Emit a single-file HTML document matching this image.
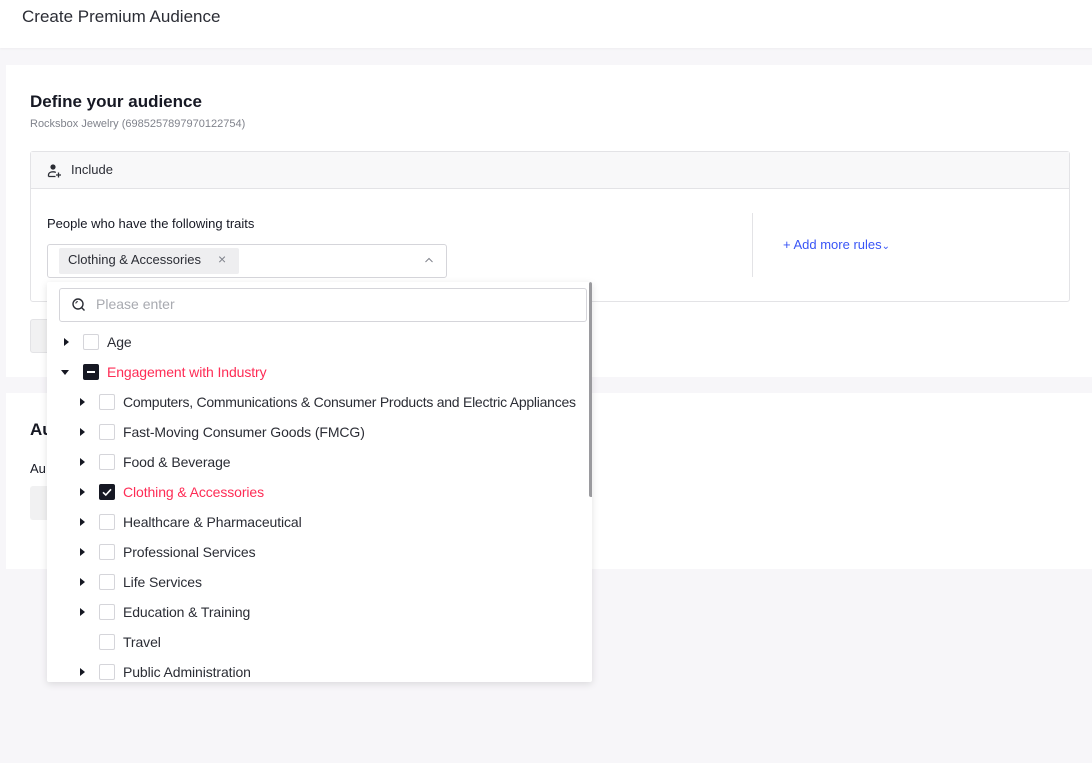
<!DOCTYPE html>
<html><head><style>
*{box-sizing:border-box;margin:0;padding:0}
body{width:1092px;height:763px;background:#f7f6f9;font-family:"Liberation Sans",sans-serif;position:relative;overflow:hidden;color:#161823}
.a{position:absolute}
.cb{position:absolute;width:16px;height:16px;border:1px solid #d5d5da;border-radius:2px;background:#fff}
.tri{position:absolute;width:0;height:0;border-top:4px solid transparent;border-bottom:4px solid transparent;border-left:5px solid #161823}
.it{position:absolute;font-size:14px;color:#2b2d35;white-space:nowrap;letter-spacing:-0.1px}
</style></head><body>
<div class="a" style="left:0;top:0;width:1092px;height:48px;background:#fff;box-shadow:0 1px 2px rgba(0,0,0,.04)"></div>
<div class="a" style="left:22px;top:7px;font-size:17px;color:#2b2d35">Create Premium Audience</div>

<div class="a" style="left:6px;top:65px;width:1086px;height:312px;background:#fff"></div>
<div class="a" style="left:30px;top:92px;font-size:17px;font-weight:bold;color:#161823">Define your audience</div>
<div class="a" style="left:30px;top:118px;font-size:11px;color:#80838c">Rocksbox Jewelry (6985257897970122754)</div>
<div class="a" style="left:30px;top:151px;width:1040px;height:151px;border:1px solid #e3e3e6;border-radius:3px"></div>
<div class="a" style="left:31px;top:152px;width:1038px;height:37px;background:#f8f8f9;border-bottom:1px solid #e3e3e6"></div>
<svg class="a" style="left:47px;top:163px" width="16" height="16" viewBox="0 0 16 16"><circle cx="6" cy="4" r="2.6" fill="#2b2d35"/><path d="M1.5 13.5v-1.5c0-2 2-3.2 4.5-3.2 1.2 0 2 .2 2.8.6M1.5 13.5h7" stroke="#2b2d35" stroke-width="1.3" fill="none"/><path d="M11.5 9.5v5M9 12h5" stroke="#2b2d35" stroke-width="1.3"/></svg>
<div class="a" style="left:71px;top:162px;font-size:13px;color:#2b2d35">Include</div>
<div class="a" style="left:47px;top:216px;font-size:13px;color:#161823">People who have the following traits</div>
<div class="a" style="left:47px;top:244px;width:400px;height:34px;border:1px solid #d5d5da;border-radius:3px"></div>
<div class="a" style="left:59px;top:248px;width:180px;height:26px;background:#eeeef0;border-radius:2px"></div>
<div class="a" style="left:68px;top:252px;font-size:13px;color:#2b2d35">Clothing &amp; Accessories</div>
<div class="a" style="left:218px;top:251px;font-size:14px;color:#80838c">×</div>
<svg class="a" style="left:424px;top:256px" width="10" height="8"><path d="M1.5 6 5 2.5 8.5 6" stroke="#80838c" fill="none"/></svg>
<div class="a" style="left:752px;top:213px;width:1px;height:64px;background:#e3e3e6"></div>
<div class="a" style="left:783px;top:237px;font-size:13px;color:#3955f6">+ Add more rules<span style="font-size:10px">&#8964;</span></div>
<div class="a" style="left:30px;top:319px;width:60px;height:34px;background:#f1f1f2;border:1px solid #e3e3e6;border-radius:3px"></div>

<div class="a" style="left:6px;top:393px;width:1086px;height:176px;background:#fff"></div>
<div class="a" style="left:30px;top:420px;font-size:17px;font-weight:bold">Au</div>
<div class="a" style="left:30px;top:461px;font-size:13px">Au</div>
<div class="a" style="left:30px;top:486px;width:60px;height:34px;background:#f1f1f2;border-radius:3px"></div>

<div class="a" style="left:47px;top:282px;width:545px;height:400px;background:#fff;box-shadow:0 2px 8px rgba(0,0,0,.12);border-radius:2px;overflow:hidden">
<div class="a" style="left:542px;top:0;width:4px;height:215px;background:#9a9a9e;border-radius:2px"></div>
</div>
<div class="a" style="left:59px;top:288px;width:528px;height:34px;border:1px solid #d5d5da;border-radius:3px"></div>
<svg class="a" style="left:71px;top:297px" width="16" height="16" viewBox="0 0 16 16"><circle cx="7" cy="7" r="5" stroke="#2b2d35" stroke-width="1.4" fill="none"/><path d="M10.5 10.5 13.5 13.5" stroke="#2b2d35" stroke-width="1.4"/><path d="M4.8 6.5a2.3 2.3 0 0 1 2-2" stroke="#2b2d35" fill="none"/></svg>
<div class="a" style="left:96px;top:296px;font-size:14px;color:#a8aab0">Please enter</div>

<div class="tri" style="left:64px;top:338px"></div><div class="cb" style="left:83px;top:334px"></div><div class="it" style="left:107px;top:334px">Age</div>
<div class="a" style="left:61px;top:370px;border-left:4px solid transparent;border-right:4px solid transparent;border-top:5px solid #161823"></div>
<div class="cb" style="left:83px;top:364px;background:#161823;border-color:#161823"></div><div class="a" style="left:87px;top:371px;width:8px;height:2px;background:#fff"></div>
<div class="it" style="left:107px;top:364px;color:#fe2c55">Engagement with Industry</div>

<div class="tri" style="left:80px;top:398px"></div><div class="cb" style="left:99px;top:394px"></div><div class="it" style="left:123px;top:394px;letter-spacing:-0.25px">Computers, Communications &amp; Consumer Products and Electric Appliances</div>
<div class="tri" style="left:80px;top:428px"></div><div class="cb" style="left:99px;top:424px"></div><div class="it" style="left:123px;top:424px">Fast-Moving Consumer Goods (FMCG)</div>
<div class="tri" style="left:80px;top:458px"></div><div class="cb" style="left:99px;top:454px"></div><div class="it" style="left:123px;top:454px">Food &amp; Beverage</div>
<div class="tri" style="left:80px;top:488px"></div><div class="cb" style="left:99px;top:484px;background:#161823;border-color:#161823"></div>
<svg class="a" style="left:99px;top:484px" width="16" height="16"><path d="M4 8.3 6.8 11 12 5.3" stroke="#fff" stroke-width="1.6" fill="none"/></svg>
<div class="it" style="left:123px;top:484px;color:#fe2c55">Clothing &amp; Accessories</div>
<div class="tri" style="left:80px;top:518px"></div><div class="cb" style="left:99px;top:514px"></div><div class="it" style="left:123px;top:514px">Healthcare &amp; Pharmaceutical</div>
<div class="tri" style="left:80px;top:548px"></div><div class="cb" style="left:99px;top:544px"></div><div class="it" style="left:123px;top:544px">Professional Services</div>
<div class="tri" style="left:80px;top:578px"></div><div class="cb" style="left:99px;top:574px"></div><div class="it" style="left:123px;top:574px">Life Services</div>
<div class="tri" style="left:80px;top:608px"></div><div class="cb" style="left:99px;top:604px"></div><div class="it" style="left:123px;top:604px">Education &amp; Training</div>
<div class="cb" style="left:99px;top:634px"></div><div class="it" style="left:123px;top:634px">Travel</div>
<div class="a" style="left:47px;top:660px;width:545px;height:22px;overflow:hidden">
<div class="tri" style="left:33px;top:8px"></div><div class="cb" style="left:52px;top:4px"></div><div class="it" style="left:76px;top:4px">Public Administration</div>
</div>
</body></html>
